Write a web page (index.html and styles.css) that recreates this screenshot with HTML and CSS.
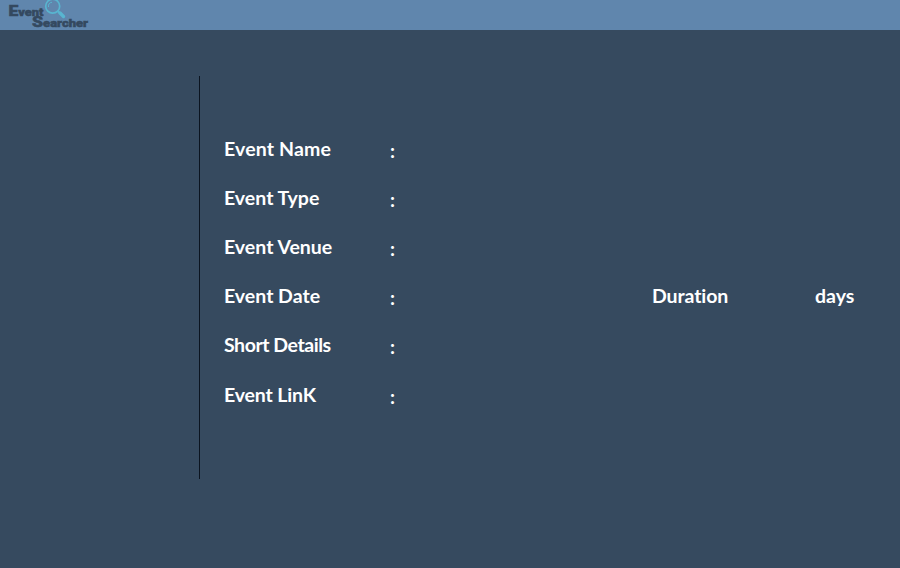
FILE: index.html
```
<!DOCTYPE html>
<html lang="en">
<head>
<meta charset="utf-8">
<title>Event Searcher</title>
<link rel="stylesheet" href="styles.css">
</head>
<body>
<header class="topbar">
  <svg class="logo" width="100" height="30" viewBox="0 0 100 30" role="img" aria-label="Event Searcher">
    <g class="logo-text">
      <text x="8.5" y="16" textLength="35" lengthAdjust="spacingAndGlyphs"><tspan class="initial">E</tspan>vent</text>
      <text x="32" y="27" textLength="56" lengthAdjust="spacingAndGlyphs"><tspan class="initial">S</tspan>earcher</text>
    </g>
    <circle class="lens" cx="52.7" cy="6.2" r="7"/>
    <path class="glint" d="M48.5 7A4.3 4.3 0 0 1 52 2.2"/>
    <path class="neck" d="M57.5 11L60 13.2"/>
    <path class="handle" d="M60 13L63.5 16.5"/>
  </svg>
</header>
<main class="content">
  <section class="details">
    <div class="row"><span class="label name">Event Name</span><span class="colon">:</span></div>
    <div class="row"><span class="label">Event Type</span><span class="colon">:</span></div>
    <div class="row"><span class="label">Event Venue</span><span class="colon">:</span></div>
    <div class="row"><span class="label">Event Date</span><span class="colon">:</span><span class="duration">Duration</span><span class="days">days</span></div>
    <div class="row"><span class="label short">Short Details</span><span class="colon">:</span></div>
    <div class="row last"><span class="label link">Event LinK</span><span class="colon">:</span></div>
  </section>
</main>
</body>
</html>
```
FILE: styles.css
```
* { box-sizing: border-box; }
body {
  margin: 0;
  height: 568px;
  overflow: hidden;
  background: #364a5f;
  color: #fff;
  font-family: "Berlin Sans FB", Lato, sans-serif;
}
.topbar { height: 30px; background: #6086ad; }
.logo { display: block; }
.logo-text {
  fill: #34495f;
  stroke: #34495f;
  stroke-width: 0.5;
  font: 900 11px Roboto, sans-serif;
}
.initial { font-size: 15px; }
.lens { fill: none; stroke: #58b5d0; stroke-width: 1.7; }
.glint { fill: none; stroke: #58b5d0; stroke-width: 1; }
.neck { stroke: #58b5d0; stroke-width: 2; }
.handle { stroke: #58b5d0; stroke-width: 3.4; stroke-linecap: round; }
.content { padding: 46px 0 0 199px; }
.details {
  height: 403px;
  border-left: 1px solid #0b1420;
  padding: 48px 0 0 24px;
}
.row {
  display: flex;
  height: 49px;
  line-height: 49px;
  font-size: 19.5px;
  font-weight: 700;
  font-variant-ligatures: none;
  white-space: nowrap;
}
.last { padding-top: 1px; }
.label { width: 165px; }
.name { letter-spacing: 0.15px; }
.short { letter-spacing: -0.45px; }
.link { letter-spacing: -0.15px; }
.colon { width: 263px; padding: 2px 0 0 1px; }
.duration { width: 163px; letter-spacing: -0.1px; }
```
